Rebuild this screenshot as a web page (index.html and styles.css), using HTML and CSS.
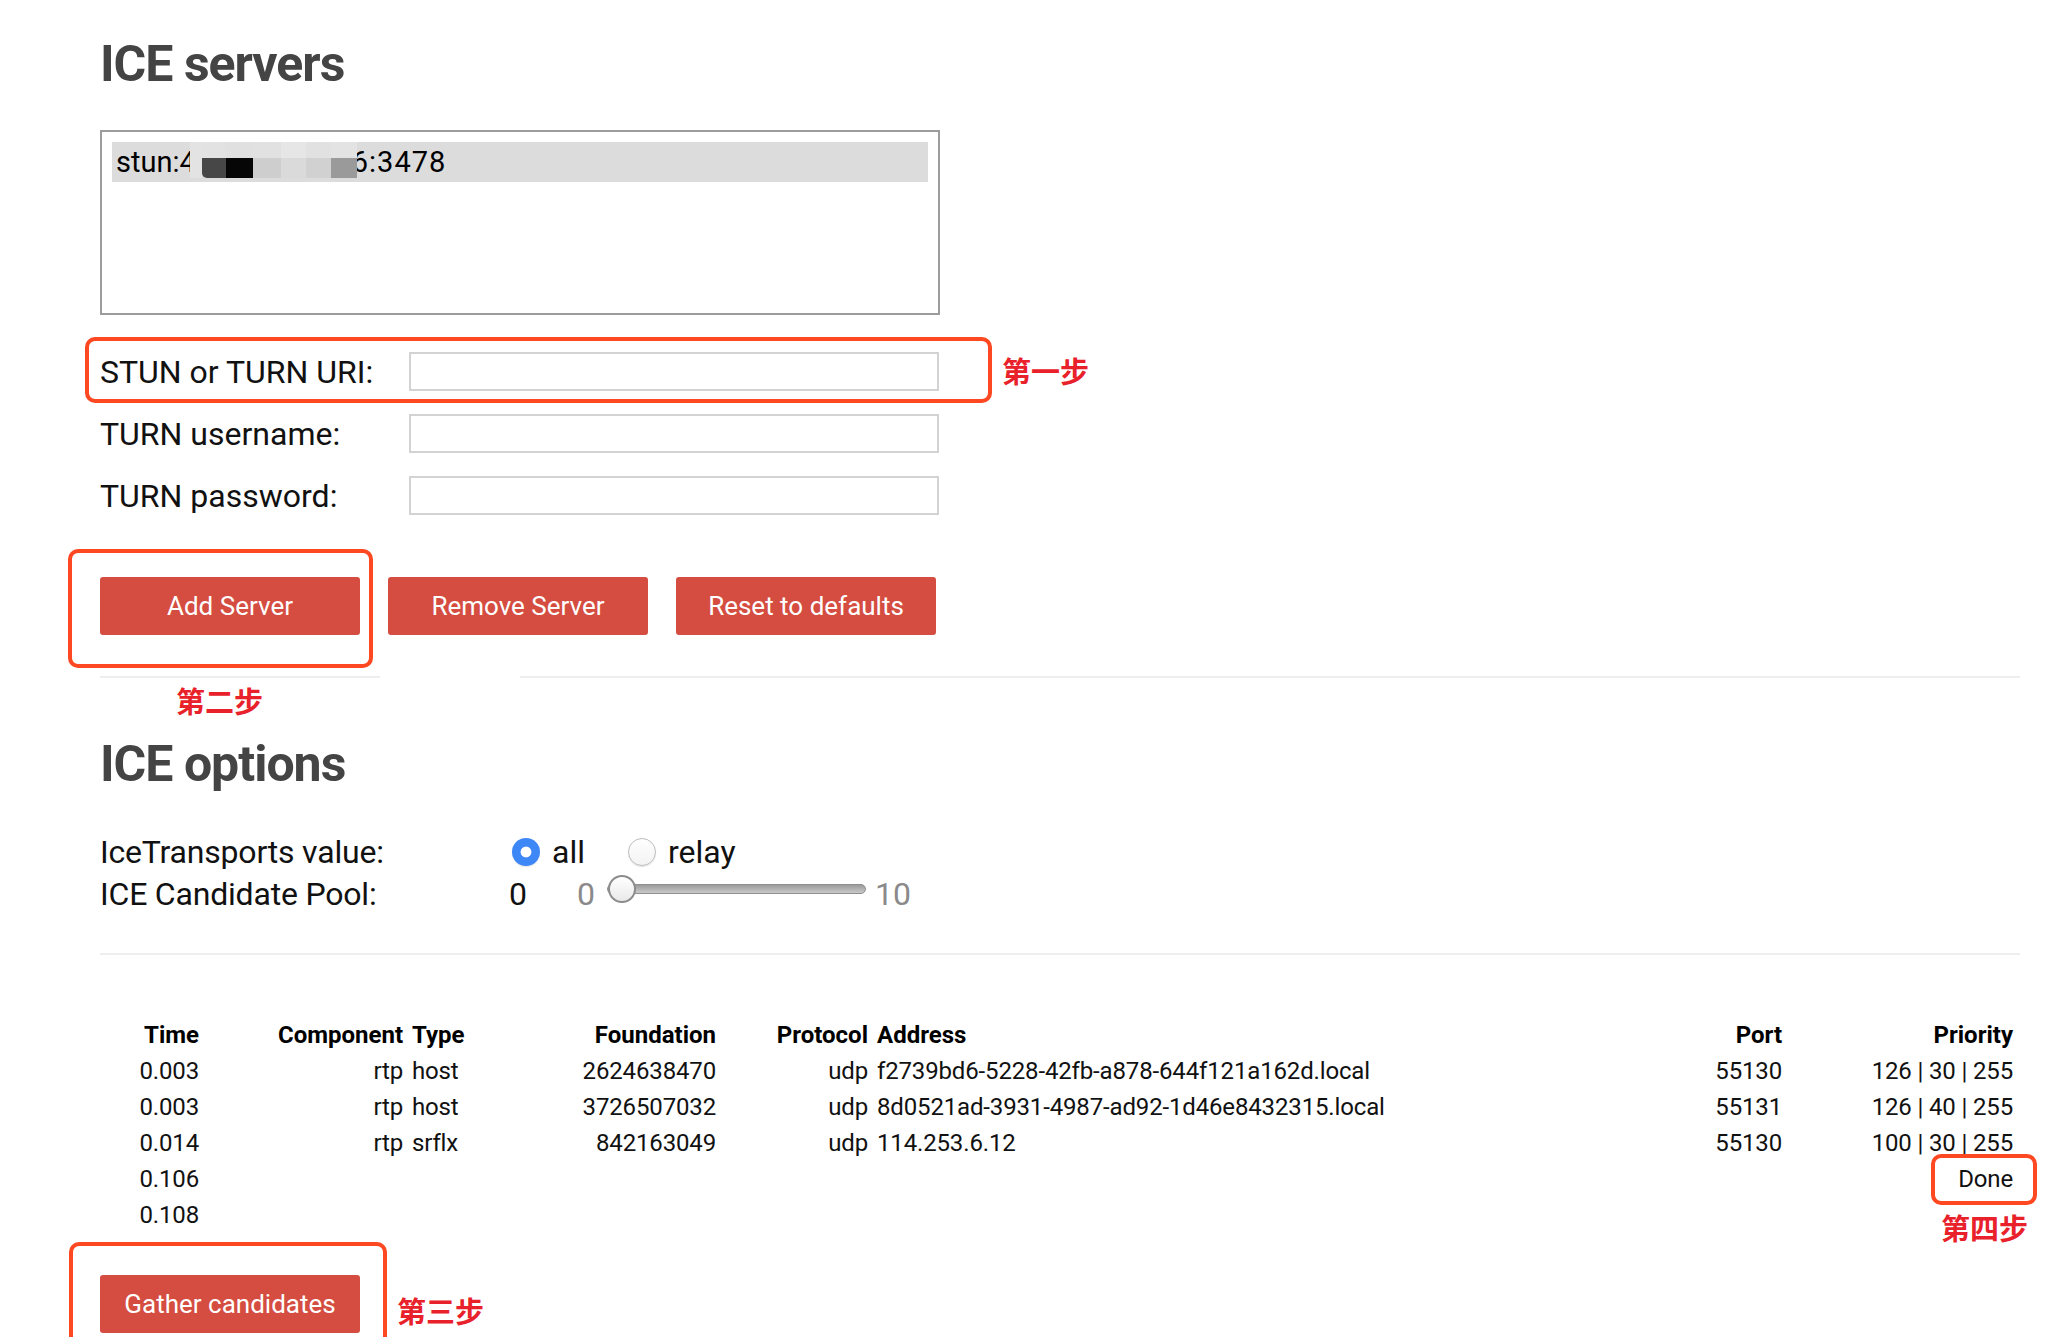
FILE: index.html
```html
<!DOCTYPE html>
<html lang="en">
<head>
<meta charset="utf-8">
<title>Trickle ICE</title>
<link rel="stylesheet" href="styles.css">
</head>
<body>
<div class="page">
  <section class="servers">
    <h2 class="section-title">ICE servers</h2>
    <div class="server-list" role="listbox">
      <div class="server-option selected" role="option"><span class="opt-text">stun:4</span><span class="mosaic"><i class="m0"></i><i class="m1"></i><i class="m2"></i><i class="m3"></i><i class="m4"></i><i class="m5"></i><i class="m6"></i></span><span class="opt-text tail">6:3478</span></div>
    </div>
    <div class="server-form">
      <div class="form-row"><label for="url">STUN or TURN URI:</label><input id="url" type="text"></div>
      <div class="form-row"><label for="username">TURN username:</label><input id="username" type="text"></div>
      <div class="form-row"><label for="password">TURN password:</label><input id="password" type="password"></div>
    </div>
    <div class="button-row">
      <button class="btn">Add Server</button>
      <button class="btn">Remove Server</button>
      <button class="btn">Reset to defaults</button>
    </div>
  </section>
  <hr class="divider">
  <section class="options">
    <h2 class="section-title">ICE options</h2>
    <div class="option-grid">
      <div class="opt-label">IceTransports value:</div>
      <div class="opt-value radios">
        <input type="radio" name="transports" id="all" class="radio" checked><label for="all" class="radio-label">all</label>
        <input type="radio" name="transports" id="relay" class="radio"><label for="relay" class="radio-label">relay</label>
      </div>
      <div class="opt-label">ICE Candidate Pool:</div>
      <div class="opt-value pool">
        <span class="pool-value">0</span>
        <span class="pool-min">0</span>
        <input type="range" class="pool-range" min="0" max="10" value="0">
        <span class="pool-max">10</span>
      </div>
    </div>
  </section>
  <hr class="divider second">
  <table class="candidates">
    <colgroup>
      <col class="c-time"><col class="c-comp"><col class="c-type"><col class="c-found"><col class="c-proto"><col class="c-addr"><col class="c-port"><col class="c-prio">
    </colgroup>
    <thead>
      <tr><th>Time</th><th>Component</th><th class="left">Type</th><th>Foundation</th><th>Protocol</th><th class="left">Address</th><th>Port</th><th>Priority</th></tr>
    </thead>
    <tbody>
      <tr><td>0.003</td><td>rtp</td><td class="left">host</td><td>2624638470</td><td>udp</td><td class="left">f2739bd6-5228-42fb-a878-644f121a162d.local</td><td>55130</td><td>126 | 30 | 255</td></tr>
      <tr><td>0.003</td><td>rtp</td><td class="left">host</td><td>3726507032</td><td>udp</td><td class="left">8d0521ad-3931-4987-ad92-1d46e8432315.local</td><td>55131</td><td>126 | 40 | 255</td></tr>
      <tr><td>0.014</td><td>rtp</td><td class="left">srflx</td><td>842163049</td><td>udp</td><td class="left">114.253.6.12</td><td>55130</td><td>100 | 30 | 255</td></tr>
      <tr><td>0.106</td><td></td><td class="left"></td><td></td><td></td><td class="left"></td><td></td><td>Done</td></tr>
      <tr><td>0.108</td><td></td><td class="left"></td><td></td><td></td><td class="left"></td><td></td><td></td></tr>
    </tbody>
  </table>
  <div class="button-row gather-row">
    <button class="btn">Gather candidates</button>
  </div>

  <div class="hr-erase"></div>
  <div class="mark mark-1"></div>
  <div class="mark mark-2"></div>
  <div class="mark mark-3"></div>
  <div class="mark mark-4"></div>
  <div class="note note-1">第一步</div>
  <div class="note note-2">第二步</div>
  <div class="note note-3">第三步</div>
  <div class="note note-4">第四步</div>
</div>
</body>
</html>
```
FILE: styles.css
```css
* { box-sizing: border-box; }
html, body { margin: 0; padding: 0; background: #fff; }
body { font-family: Roboto, "Noto Sans", "Liberation Sans", sans-serif; color: #000; }

.page {
  position: relative;
  width: 2068px;
  height: 1337px;
  overflow: hidden;
  padding: 34px 0 0 100px;
}

.section-title {
  margin: 0;
  font-size: 50px;
  line-height: 60px;
  font-weight: 700;
  letter-spacing: -1px;
  color: #444;
}

/* server list */
.server-list {
  margin-top: 36px;
  width: 840px;
  height: 185px;
  border: 2px solid #9c9c9c;
  padding: 10px;
}
.server-option {
  height: 40px;
  background: #dcdcdc;
  font-size: 29px;
  line-height: 40px;
  padding-left: 4px;
  white-space: nowrap;
  color: #000;
}
.opt-text { vertical-align: top; }
.opt-text.tail { letter-spacing: 1px; }
.mosaic {
  display: inline-flex;
  vertical-align: top;
  height: 36px;
  margin-left: -6px;
  margin-right: -5px;
  position: relative;
  z-index: 1;
}
.mosaic i { display: block; height: 36px; }
.mosaic .m0 { width: 12px; background: #e3e3e3; }
.mosaic .m1 { width: 24px; background: linear-gradient(#e2e2e2 0 16px, #474747 16px); border-bottom-left-radius: 5px; }
.mosaic .m2 { width: 27px; background: linear-gradient(#e0e0e0 0 16px, #060606 16px); }
.mosaic .m3 { width: 28px; background: linear-gradient(#e1e1e1 0 16px, #cecece 16px); }
.mosaic .m4 { width: 25px; background: linear-gradient(#e6e6e6 0 16px, #dadada 16px); }
.mosaic .m5 { width: 25px; background: linear-gradient(#e1e1e1 0 16px, #d1d1d1 16px); }
.mosaic .m6 { width: 26px; background: linear-gradient(#e3e3e3 0 16px, #9a9a9a 16px); }

/* form */
.server-form {
  margin-top: 37px;
  display: flex;
  flex-direction: column;
  gap: 23px;
}
.form-row {
  display: flex;
  align-items: center;
  height: 39px;
}
.form-row label {
  width: 309px;
  font-size: 32px;
  color: #111;
}
.form-row input {
  width: 530px;
  height: 39px;
  margin: 0;
  border: 2px solid #d3d3d3;
  background: #fff;
  font-size: 24px;
}

/* buttons */
.button-row {
  margin-top: 62px;
  display: flex;
  gap: 28px;
}
.btn {
  width: 260px;
  height: 58px;
  border: 0;
  border-radius: 3px;
  background: #d54c40;
  color: #fff;
  font-family: Roboto, "Noto Sans", sans-serif;
  font-size: 26px;
  padding: 0;
}

.divider {
  margin: 41px 0 0 0;
  width: 1920px;
  height: 0;
  border: 0;
  border-top: 2px solid #eeeeee;
}
.divider.second { margin-top: 38px; }

.options .section-title { margin-top: 56px; }
.option-grid {
  margin-top: 37px;
  display: grid;
  grid-template-columns: 409px auto;
  font-size: 32px;
  line-height: 42px;
  color: #111;
}
.opt-label { letter-spacing: -0.2px; }
.opt-value { display: flex; align-items: center; }
.radio {
  appearance: none;
  -webkit-appearance: none;
  width: 28px;
  height: 28px;
  margin: 0 12px 0 3px;
  border-radius: 50%;
  border: 1.5px solid #bdbdbd;
  background: linear-gradient(#fff, #f3f3f3);
  box-shadow: 0 1px 1px rgba(0,0,0,0.12);
}
.radio:checked {
  border: 0;
  background: radial-gradient(circle, #fff 0 5px, #3d87f6 5.8px);
}
.radio-label { margin-right: 40px; }
.pool-value { width: 18px; }
.pool-min { margin-left: 50px; color: #8a8a8a; }
.pool-max { margin-left: 9px; color: #8a8a8a; }
.pool-range {
  -webkit-appearance: none;
  appearance: none;
  width: 259px;
  height: 28px;
  margin: -10px 0 0 12px;
  background: transparent;
}
.pool-range::-webkit-slider-runnable-track {
  height: 10px;
  border-radius: 5px;
  background: linear-gradient(#9b9b9b, #c9c9c9);
  border: 1px solid #8f8f8f;
}
.pool-range::-webkit-slider-thumb {
  -webkit-appearance: none;
  appearance: none;
  width: 28px;
  height: 28px;
  margin-top: -10px;
  border-radius: 50%;
  border: 2px solid #8c8c8c;
  background: linear-gradient(#ffffff, #e9e9e9);
}

/* table */
.candidates {
  margin-top: 62px;
  width: 1913px;
  table-layout: fixed;
  border-collapse: collapse;
  font-size: 24px;
  line-height: 36px;
  color: #111;
}
.candidates th, .candidates td {
  padding: 0;
  text-align: right;
  white-space: nowrap;
  height: 36px;
}
.candidates td { letter-spacing: -0.15px; }
.candidates th { font-weight: 700; color: #000; }
.candidates .left { text-align: left; padding-left: 9px; }
.c-time { width: 99px; }
.c-comp { width: 204px; }
.c-type { width: 157px; }
.c-found { width: 156px; }
.c-proto { width: 152px; }
.c-addr { width: 732px; }
.c-port { width: 182px; }
.c-prio { width: 231px; }

.gather-row { margin-top: 42px; }

/* annotations overlay */
.hr-erase {
  position: absolute;
  left: 380px;
  top: 670px;
  width: 140px;
  height: 12px;
  background: #fff;
}
.mark {
  position: absolute;
  border: 4px solid #fd4822;
  border-radius: 10px;
}
.mark-1 { left: 85px; top: 337px; width: 907px; height: 66px; }
.mark-2 { left: 68px; top: 549px; width: 305px; height: 119px; }
.mark-3 { left: 69px; top: 1242px; width: 318px; height: 130px; }
.mark-4 { left: 1931px; top: 1154px; width: 106px; height: 51px; }
.note {
  position: absolute;
  font-family: "Noto Sans CJK SC", sans-serif;
  font-weight: 700;
  font-size: 29px;
  line-height: 29px;
  color: #e8212b;
  white-space: nowrap;
}
.note-1 { left: 1002px; top: 356px; }
.note-2 { left: 176px; top: 686px; }
.note-3 { left: 397px; top: 1296px; }
.note-4 { left: 1941px; top: 1213px; }
```
